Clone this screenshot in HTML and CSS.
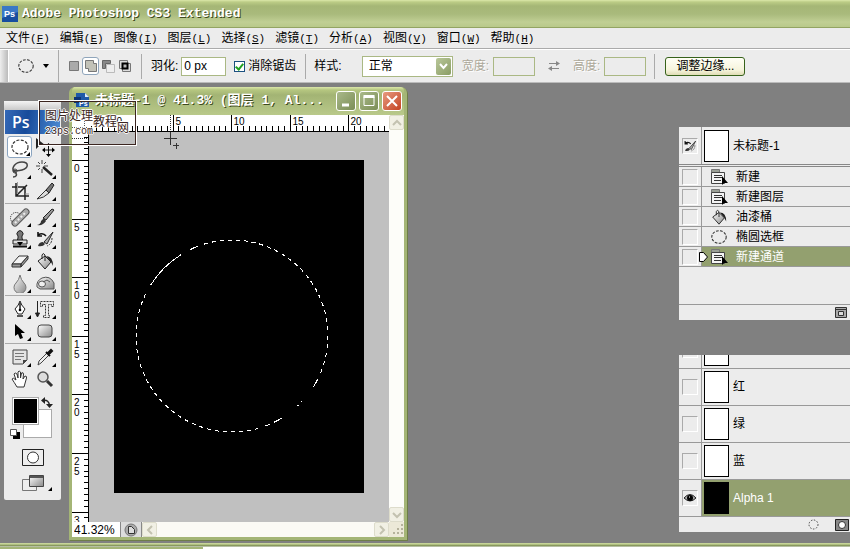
FILE: index.html
```html
<!doctype html>
<html lang="zh-CN">
<head>
    <meta charset="UTF-8">
    <meta name="viewport" content="width=device-width, initial-scale=1.0">
    <title>Adobe Photoshop CS3 Extended</title>
    <link rel="stylesheet" href="styles.css">
</head>
<body>

    <svg class="defs" aria-hidden="true">
        <linearGradient id="metal" x1="0" y1="0" x2="1" y2="1">
            <stop offset="0" stop-color="#fff"/>
            <stop offset="1" stop-color="#888"/>
        </linearGradient>
        <symbol id="i-ellipse" viewBox="0 0 20 20"><ellipse cx="10" cy="10" rx="8" ry="7" fill="none" stroke="#333" stroke-width="1.2" stroke-dasharray="3 1.5"/></symbol>
        <symbol id="i-bucket" viewBox="0 0 20 20">
            <path d="M3 10L10 5l6 6-6 7z" fill="url(#metal)" stroke="#222"/>
            <path d="M7 8V4q1-3 3 0v6" fill="none" stroke="#222"/>
            <path d="M11 5q7 0 7 10l-2-4z" fill="#222"/>
        </symbol>
        <symbol id="i-history" viewBox="0 0 20 20">
            <path d="M3 17q1-4 5-4l2 2q-2 3-7 2z" fill="#333"/>
            <path d="M9 13l9-10-6 12z" fill="#aaa" stroke="#222"/>
            <path d="M3 6q5-3 8 1M3 3v4h4" fill="none" stroke="#111" stroke-width="1.6"/>
            <path d="M17 9q0 6-5 8" fill="none" stroke="#333" stroke-dasharray="2 1"/>
        </symbol>
        <symbol id="i-state" viewBox="0 0 18 18">
            <path d="M1.500 1.500h8v3h-8z" fill="#9a9f95" stroke="#777"/>
            <path d="M1.500 4.500h13v11h-13z" fill="#f4f4f4" stroke="#444"/>
            <path d="M4 7.500h8M4 9.500h8M4 12.500h7" stroke="#333"/>
            <path d="M12 8v9l2-2h4z" fill="#000"/>
        </symbol>
    </svg>

    <header class="titlebar">
        <svg class="app-icon" viewBox="0 0 16 16" aria-hidden="true"><rect width="16" height="16" fill="#174ea0"/><path d="M0 0h16v6L0 12z" fill="#3a78c6"/><text x="2" y="11">Ps</text></svg>
        <h1>Adobe Photoshop CS3 Extended</h1>
    </header>

    <nav class="menu">
        <a href="#">文件<span>(<u>F</u>)</span></a>
        <a href="#">编辑<span>(<u>E</u>)</span></a>
        <a href="#">图像<span>(<u>I</u>)</span></a>
        <a href="#">图层<span>(<u>L</u>)</span></a>
        <a href="#">选择<span>(<u>S</u>)</span></a>
        <a href="#">滤镜<span>(<u>T</u>)</span></a>
        <a href="#">分析<span>(<u>A</u>)</span></a>
        <a href="#">视图<span>(<u>V</u>)</span></a>
        <a href="#">窗口<span>(<u>W</u>)</span></a>
        <a href="#">帮助<span>(<u>H</u>)</span></a>
    </nav>

    <form class="options">
        <div class="grip"></div>
        <button type="button" class="preset" aria-label="椭圆选框工具">
            <svg width="18" height="18"><use href="#i-ellipse"/></svg>
            <svg width="6" height="4"><path d="M0 0h6L3 4z"/></svg>
        </button>
        <div class="modes">
            <button type="button" aria-label="新选区"><svg width="14" height="14"><path d="M2.500 2.500h9v9h-9z" fill="#aaa" stroke="#777"/></svg></button>
            <button type="button" class="on" aria-label="添加到选区"><svg width="14" height="14"><path d="M1.500 1.500h8v3h3v8h-8v-3h-3z" fill="#c2c2b8" stroke="#777"/></svg></button>
            <button type="button" aria-label="从选区减去"><svg width="14" height="14"><path d="M5.500 5.500h8v8h-8z" fill="#eee" stroke="#bbb"/><path d="M1.500 1.500h8v3h-5v5h-3z" fill="#888" stroke="#666"/></svg></button>
            <button type="button" aria-label="与选区交叉"><svg width="14" height="14"><path d="M1.500 1.500h8v8h-8zM4.500 4.500h8v8h-8z" fill="#ddd" stroke="#777"/><path d="M4.500 4.500h5v5h-5z" fill="#bbb" stroke="#000" stroke-width="2"/></svg></button>
        </div>
        <div class="feather">
            <label for="feather">羽化:</label>
            <input id="feather" type="text" value="0 px">
            <input id="alias" type="checkbox" checked>
            <label for="alias">消除锯齿</label>
        </div>
        <div class="style">
            <label for="mode">样式:</label>
            <span class="select">
                <select id="mode"><option>正常</option></select>
                <svg width="15" height="17" viewBox="0 0 15 17" aria-hidden="true"><path d="M4 6l3.500 4L11 6" fill="none" stroke="#fff" stroke-width="2"/></svg>
            </span>
            <label class="off" for="w">宽度:</label>
            <input id="w" type="text" disabled>
            <button type="button" class="swap" aria-label="高度和宽度互换"><svg width="12" height="12"><path d="M1 3.500h9M2 8.500h9" stroke="#888"/><path d="M8 1l4 2.500L8 6zM4 6L0 8.500 4 11z" fill="#888"/></svg></button>
            <label class="off" for="h">高度:</label>
            <input id="h" type="text" disabled>
        </div>
        <button type="button" class="refine">调整边缘...</button>
    </form>

    <main class="workspace">
        <aside class="toolbox">
            <div class="toolbox-top"></div>
            <div class="ps">Ps</div>
            <div class="tools">
                <button class="tool more on" aria-label="椭圆选框"><svg><use href="#i-ellipse"/></svg></button>
                <button class="tool" aria-label="移动"><svg viewBox="0 0 20 20"><path d="M1 1v11l3-3 6-1z" fill="#222"/><path d="M13.500 8v10M8.500 13h10" stroke="#111"/><path d="M11 9l2.500-3L16 9zM11 17l2.500 3 2.500-3zM10 10.500L7 13l3 2.500zM17 10.500l3 2.500-3 2.500z"/></svg></button>
                <button class="tool more" aria-label="套索"><svg viewBox="0 0 20 20"><path d="M4 13C1 9 5 3 12 3s7 6 0 8-10-1-7 2 1 5-2 5" fill="none" stroke="#444" stroke-width="1.500"/><circle cx="5" cy="12" r="2" fill="none" stroke="#444"/></svg></button>
                <button class="tool more" aria-label="魔棒"><svg viewBox="0 0 20 20"><path d="M8 8l9 8" stroke="#222" stroke-width="2.500"/><path d="M7 1v4M7 10v4M1 7h4M9 7h4M3 3l2 2M11 3L9 5M3 11l2-2" stroke="#444"/></svg></button>
                <button class="tool" aria-label="裁剪"><svg viewBox="0 0 20 20"><path d="M6 2v13h13M2 6h13v13M6 15L17 4" fill="none" stroke="#222" stroke-width="1.500"/><path d="M7.500 1v12M15 13h4" stroke="#999"/></svg></button>
                <button class="tool more" aria-label="切片"><svg viewBox="0 0 20 20"><path d="M2 18L11 9l3 3q-5 5-12 6z" fill="#ddd" stroke="#333"/><path d="M11 9l6-7 2 2-5 8z" fill="#777" stroke="#222"/></svg></button>
            </div>
            <div class="tools">
                <button class="tool more" aria-label="污点修复画笔"><svg viewBox="0 0 20 20"><circle cx="6" cy="11" r="5.500" fill="none" stroke="#222" stroke-dasharray="1 1"/><path d="M5 16L16 5" stroke="#555" stroke-width="7" stroke-linecap="round"/><path d="M5 16L16 5" stroke="#aaa" stroke-width="5" stroke-linecap="round"/><path d="M5 16L16 5" stroke="#eee" stroke-width="2" stroke-dasharray="2 2"/></svg></button>
                <button class="tool more" aria-label="画笔"><svg viewBox="0 0 20 20"><path d="M8 11l9-9 2 1-8 10z" fill="#999" stroke="#222"/><path d="M2 18q4-1 4-4l3-3 2 3q-3 5-9 4z" fill="#333"/></svg></button>
                <button class="tool more" aria-label="仿制图章"><svg viewBox="0 0 20 20"><path d="M8 9V7a3 3 0 1 1 4 0v2l1 3H7z" fill="#777" stroke="#222"/><path d="M3 11h14v4H3z" fill="#ddd" stroke="#222"/><path d="M3 17.500h14" stroke="#111" stroke-width="2"/><path d="M7 13h6l-3 4z"/></svg></button>
                <button class="tool more" aria-label="历史记录画笔"><svg><use href="#i-history"/></svg></button>
                <button class="tool more" aria-label="橡皮擦"><svg viewBox="0 0 20 20"><path d="M2 13L9 5h9l-7 8z" fill="#f4f4f4" stroke="#333"/><path d="M2 13v3h9v-3zM11 16l7-8V5l-7 8z" fill="#999" stroke="#333"/></svg></button>
                <button class="tool more" aria-label="油漆桶"><svg><use href="#i-bucket"/></svg></button>
                <button class="tool more" aria-label="模糊"><svg viewBox="0 0 20 20"><path d="M10 2q1 5 4 8a6 6 0 1 1-8 0q3-3 4-8z" fill="url(#metal)" stroke="#777"/></svg></button>
                <button class="tool more" aria-label="海绵"><svg viewBox="0 0 20 20"><path d="M2 14Q1 8 7 5q8-3 12 5v6H5z" fill="url(#metal)" stroke="#555"/><ellipse cx="7" cy="11" rx="3.500" ry="3" fill="#eee" stroke="#555"/><path d="M8 9l4-2 3 2" fill="none" stroke="#555"/></svg></button>
            </div>
            <div class="tools">
                <button class="tool more" aria-label="钢笔"><svg viewBox="0 0 20 20"><path d="M10 2q-1 4-5 8l3 5h4l3-5q-4-4-5-8z" fill="#fff" stroke="#222"/><path d="M10 4v7M7 17h6" stroke="#222" stroke-width="1.500"/><circle cx="10" cy="11" r="1.300"/></svg></button>
                <button class="tool more" aria-label="文字蒙版"><svg viewBox="0 0 20 20"><path d="M5.500 2.500h13v5h-2v-2h-3v11h1v2h-6v-2h2v-11h-3v2h-2z" fill="none" stroke="#333" stroke-dasharray="2 1"/><path d="M2.500 2v15M.500 14l2 4 2-4z" fill="#222" stroke="#222"/></svg></button>
                <button class="tool more" aria-label="路径选择"><svg viewBox="0 0 20 20"><path d="M5 3v12l3-2 2 5 3-1-2-5h4z"/></svg></button>
                <button class="tool more" aria-label="圆角矩形"><svg viewBox="0 0 20 20"><rect x="3" y="4" width="14" height="12" rx="3" fill="url(#metal)" stroke="#444"/></svg></button>
            </div>
            <div class="tools">
                <button class="tool more" aria-label="注释"><svg viewBox="0 0 20 20"><path d="M3 3h14v10l-4 4H3z" fill="#e4e4e4" stroke="#444"/><path d="M5 6.500h9M5 9.500h9M5 12.500h6" stroke="#777"/><path d="M17 13h-4v4z" fill="#444"/></svg></button>
                <button class="tool more" aria-label="吸管"><svg viewBox="0 0 20 20"><path d="M3 18l1-4 8-8 2 2-8 8z" fill="#eee" stroke="#444"/><path d="M11 5l4 4M13 6l3-3 1 1-3 3z" stroke="#111" stroke-width="2"/></svg></button>
                <button class="tool" aria-label="抓手"><svg viewBox="0 0 20 20"><path d="M7 18Q4 13 2 10q1-2 4 1L4 5q1-2 3 0l1 4V3q1-2 2.500 0v6l1-5q2-1 2 1l-.500 5 2-3q2 0 1.500 2L14 18z" fill="#fff" stroke="#333"/></svg></button>
                <button class="tool" aria-label="缩放"><svg viewBox="0 0 20 20"><circle cx="8" cy="8" r="5" fill="#ddd" stroke="#555" stroke-width="1.500"/><path d="M12 12l5 5" stroke="#333" stroke-width="3"/></svg></button>
            </div>
            <div class="colors">
                <button class="fore" aria-label="前景色"></button>
                <button class="back" aria-label="背景色"></button>
                <svg class="swap-colors" width="12" height="12" aria-hidden="true"><path d="M2 3.500q6-1 6.500 5" fill="none" stroke="#222" stroke-width="1.500"/><path d="M4 0v7L0 3.500zM5 7h7l-3.500 4z" fill="#222"/></svg>
                <svg class="default-colors" width="10" height="10" aria-hidden="true"><path d="M3 3h7v7H3z"/><path d="M.500.500h6v6h-6z" fill="#fff" stroke="#555"/></svg>
            </div>
            <button class="wide" aria-label="快速蒙版"><svg width="22" height="17"><path d="M.500.500h21v16H.500z" fill="#eee" stroke="#222"/><circle cx="11" cy="8.500" r="5.500" fill="#fff" stroke="#333"/></svg></button>
            <button class="wide more" aria-label="屏幕模式"><svg width="22" height="17"><path d="M.500 4.500h14v11H.500z" fill="#eee" stroke="#777"/><path d="M7.500.500h14v11h-14z" fill="url(#metal)" stroke="#444"/><path d="M8 1h13v2H8z" fill="#555"/></svg></button>
        </aside>

        <section class="doc">
            <div class="doc-title">
                <svg width="16" height="16" viewBox="0 0 16 16" aria-hidden="true"><path d="M2 0h9l4 4v10H2z" fill="#1e59a8"/><path d="M11 0v4h4z" fill="#dce9f8"/><path d="M0 4h7v6H0z" fill="#0d3474"/><text class="mini" x="5" y="13">Ps</text></svg>
                <h2>未标题-1 @ 41.3% (图层 1, Al...</h2>
                <button aria-label="最小化"><svg width="16" height="16"><path d="M4 12h7" stroke="#fff" stroke-width="3"/></svg></button>
                <button aria-label="最大化"><svg width="16" height="16"><path d="M3 3.500h10v9H3z" fill="none" stroke="#fff"/><path d="M2.500 3.500h11" stroke="#fff" stroke-width="3"/></svg></button>
                <button class="close" aria-label="关闭"><svg width="16" height="16"><path d="M3 3l10 10M13 3L3 13" stroke="#fff" stroke-width="2"/></svg></button>
            </div>
            <div class="doc-body">
                <svg class="corner" width="17" height="17" aria-hidden="true"><path d="M12.500 0v16M0 12.500h16" stroke="#555" stroke-dasharray="1 1"/></svg>
                <svg class="ruler-x" height="17"></svg>
                <div class="scroll-y">
                    <button aria-label="向上"><svg width="10" height="8"><path d="M1 6l4-4 4 4"/></svg></button>
                    <button aria-label="向下"><svg width="10" height="8"><path d="M1 2l4 4 4-4"/></svg></button>
                </div>
                <svg class="ruler-y" width="17" height="390"></svg>
                <div class="canvas">
                    <svg class="image" width="250" height="333" viewBox="0 0 250 333">
                        <circle class="ants" cx="118" cy="176" r="96" pathLength="360"/>
                    </svg>
                    <svg class="cursor" width="17" height="17" aria-hidden="true"><path d="M0 6.500h13M6.500 0v13M9 13.500h6M12.500 11v6" stroke="#333"/></svg>
                </div>
            </div>
            <div class="doc-status">
                <input type="text" value="41.32%" aria-label="缩放比例">
                <button class="info" aria-label="文档信息"><svg width="14" height="14"><circle cx="7" cy="7" r="6" fill="#aaa" stroke="#777"/><path d="M4.500 3.500h3l3 3v4h-6z" fill="#ddd" stroke="#333"/></svg></button>
                <div class="scroll-x">
                    <button aria-label="向左"><svg width="8" height="10"><path d="M6 1L2 5l4 4"/></svg></button>
                    <button aria-label="向右"><svg width="8" height="10"><path d="M2 1l4 4-4 4"/></svg></button>
                </div>
                <svg class="resize" width="15" height="15" aria-hidden="true"><path d="M12 2h2v2h-2zM8 6h2v2H8zM12 6h2v2h-2zM4 10h2v2H4zM8 10h2v2H8zM12 10h2v2h-2z" fill="#b5b29c"/></svg>
            </div>
        </section>

        <div class="dock">
            <section class="panel">
                <div class="row snapshot">
                    <span class="cell"><i class="box"><svg width="14" height="14"><use href="#i-history"/></svg></i></span>
                    <span class="thumb"></span>未标题-1
                </div>
                <div class="row state"><span class="cell"><i class="box"></i></span><svg><use href="#i-state"/></svg>新建</div>
                <div class="row state"><span class="cell"><i class="box"></i></span><svg><use href="#i-state"/></svg>新建图层</div>
                <div class="row state"><span class="cell"><i class="box"></i></span><svg><use href="#i-bucket"/></svg>油漆桶</div>
                <div class="row state"><span class="cell"><i class="box"></i></span><svg><use href="#i-ellipse"/></svg>椭圆选框</div>
                <div class="row state current"><span class="cell"><i class="box"></i><svg class="slider" width="9" height="10"><path d="M.500.500h4l4 4.500-4 4.500h-4z" fill="#fff" stroke="#000"/></svg></span><svg><use href="#i-state"/></svg>新建通道</div>
                <div class="blank"></div>
                <div class="panel-foot">
                    <button aria-label="从当前状态创建新文档"><svg width="12" height="11"><path d="M.500.500h11v10H.500z" fill="#aaa" stroke="#333"/><path d="M1 2.500h10M3.500 4.500h5v4h-5z" fill="#ddd" stroke="#333"/></svg></button>
                </div>
            </section>

            <section class="panel">
                <div class="row channel cut"><span class="cell"><i class="box"></i></span><span class="thumb"></span></div>
                <div class="row channel"><span class="cell"><i class="box"></i></span><span class="thumb"></span>红</div>
                <div class="row channel"><span class="cell"><i class="box"></i></span><span class="thumb"></span>绿</div>
                <div class="row channel"><span class="cell"><i class="box"></i></span><span class="thumb"></span>蓝</div>
                <div class="row channel current"><span class="cell"><i class="box"><svg width="12" height="10"><path d="M0 5q6-7 12 0-6 6-12 0z" fill="#aaa" stroke="#222"/><circle cx="6" cy="5" r="3"/><path d="M5 4h1" stroke="#fff"/></svg></i></span><span class="thumb black"></span>Alpha 1</div>
                <div class="panel-foot load">
                    <button aria-label="将通道作为选区载入"><svg width="11" height="11"><circle cx="5.500" cy="5.500" r="4.500" fill="none" stroke="#444" stroke-dasharray="1.500 1.500"/></svg></button>
                    <button aria-label="将选区存储为通道"><svg width="14" height="12"><path d="M.500.500h13v11H.500z" fill="#888" stroke="#222"/><circle cx="7" cy="6" r="3.500" fill="#fff" stroke="#333"/></svg></button>
                </div>
            </section>
        </div>

        <div class="stamp">
            <p>图片处理<br><span>23ps.com</span></p>
            <p class="mid">教程</p>
            <p class="low">网</p>
        </div>
    </main>

    <footer class="bottom"><div></div></footer>

    <script>
        const rulerX = document.querySelector(".ruler-x"),
            rulerY = document.querySelector(".ruler-y"),
            ants = document.querySelector(".ants"),
            unit = 11.72;

        // half-unit ticks, a long tick and a label on every fifth unit
        let path = "", text = "";
        for (let i = -4; i < 47; i++) {
            let x = Math.round(25 + i * unit / 2) + 0.5;
            path += "M" + x + " " + (i % 10 == 0 ? 0 : 11) + "V16";
            if (i % 10 == 0) {
                text += "<text x='" + (x + 2) + "' y='10'>" + i / 2 + "</text>";
            }
        }
        rulerX.innerHTML = "<path d='" + path + "M0 16.5H300'/>" + text +
            "<path class='mark' d='M81.5 0V16'/>";

        path = "";
        text = "";
        for (let i = -4; i < 62; i++) {
            let y = Math.round(28 + i * unit / 2) + 0.5;
            path += "M" + (i % 10 == 0 ? 0 : 12) + " " + y + "H16";
            if (i % 10 == 0) {
                String(i / 2).split("").forEach((n, k) => {
                    let base = y + 11 + k * 10;
                    if (base < 394) {
                        text += "<text x='2' y='" + base + "'>" + n + "</text>";
                    }
                });
            }
        }
        rulerY.innerHTML = "<path d='" + path + "M16.5 0V390'/>" + text +
            "<path class='mark' d='M0 6.5H16'/>";

        // selection outline: pairs of start and end angles, clockwise
        let runs = [];
        for (let a = 0; a < 24; a += 5) runs.push([a, a + 2.5]);
        runs.push([27, 32], [43, 43.6], [46, 47], [59, 64], [67, 70]);
        for (let a = 74; a < 208; a += 4.8) runs.push([a, a + 2.4]);
        runs.push([212, 238], [244, 249]);
        for (let a = 253; a < 358; a += 4.8) runs.push([a, a + 2.4]);
        let dash = [], last = 0;
        runs.forEach((r, i) => {
            if (i > 0) dash.push(r[0] - last);
            dash.push(r[1] - r[0]);
            last = r[1];
        });
        dash.push(360 - last);
        ants.setAttribute("stroke-dasharray", dash.join(" "));
    </script>
</body>
</html>
```
FILE: styles.css
```css
*{
    box-sizing: border-box;
}
body{
    margin: 0;
    min-height: 100vh;
    display: flex;
    flex-direction: column;
    overflow: hidden;
    background: #808080;
    color: #000;
    font: 12px/16px "Liberation Sans", "Noto Sans CJK SC", sans-serif;
}
button{
    padding: 0;
    border: 0;
    background: none;
    color: inherit;
    font: inherit;
    display: flex;
    align-items: center;
    justify-content: center;
}
input, select{
    font: inherit;
    margin: 0;
    border-radius: 0;
}
svg{
    display: block;
    flex: none;
}
h1, h2, p{
    margin: 0;
}
.defs{
    position: absolute;
    width: 0;
    height: 0;
}

/* title and menu */
.titlebar{
    height: 28px;
    display: flex;
    align-items: center;
    gap: 4px;
    padding: 0 2px;
    border-bottom: 1px solid #93a463;
    background: linear-gradient(#dce8aa 0, #bccc86 2px, #a5b676 6px, #a9ba7c 14px, #c0cf94 22px, #b9c98a);
}
.app-icon{
    width: 16px;
    height: 16px;
}
.app-icon text, .mini{
    fill: #fff;
    font-size: 9px;
    font-weight: bold;
}
.mini{
    font-size: 7px;
}
.titlebar h1, .doc-title h2{
    color: #fff;
    font: bold 13px/18px "Liberation Mono", "Noto Sans CJK SC", monospace;
    text-shadow: 1px 1px 0 #3d4a1c;
    white-space: nowrap;
}
.menu{
    height: 21px;
    display: flex;
    align-items: center;
    gap: 10px;
    padding: 0 6px;
    background: #ececec;
    border-bottom: 1px solid #aaa;
}
.menu a{
    color: #000;
    text-decoration: none;
    white-space: nowrap;
}
.menu span{
    font: 11px "Liberation Mono", monospace;
}

/* tool options */
.options{
    height: 34px;
    display: flex;
    align-items: center;
    background: #ececec;
    border-top: 1px solid #fff;
    border-bottom: 1px solid #bbb;
    white-space: nowrap;
}
.grip{
    width: 9px;
    align-self: stretch;
    background: linear-gradient(90deg, #eee, #bbb);
    border-right: 1px solid #fff;
}
.preset{
    align-self: stretch;
    gap: 8px;
    padding: 0 9px 0 8px;
    border-right: 1px solid #aaa;
}
.modes, .feather, .style{
    display: flex;
    align-items: center;
    height: 25px;
    border-right: 1px solid #aaa;
}
.modes{
    padding: 0 8px 0 6px;
}
.modes button{
    width: 17px;
    height: 18px;
}
.modes .on{
    border: 1px solid #8fa5bb;
    border-radius: 3px;
    background: #fff;
}
.feather{
    gap: 3px;
    padding: 0 9px;
}
.options input[type=text]{
    width: 42px;
    height: 19px;
    padding: 0 2px;
    border: 1px solid #aab884;
    background: #fff;
}
.options input:disabled{
    background: #ececec;
}
.options .feather input[type=text]{
    width: 45px;
    margin-right: 5px;
}
.options input[type=checkbox]{
    appearance: none;
    width: 11px;
    height: 11px;
    border: 1px solid #1c5180;
    background: #fff;
    display: grid;
    place-items: center;
}
.options input[type=checkbox]:checked::after{
    content: "";
    width: 3px;
    height: 6px;
    border: solid #21a121;
    border-width: 0 2px 2px 0;
    transform: rotate(40deg);
}
.style{
    gap: 4px;
    padding: 0 8px;
}
.select{
    position: relative;
    margin: 0 5px 0 16px;
}
.select select{
    appearance: none;
    display: block;
    width: 91px;
    height: 21px;
    padding: 0 6px;
    border: 1px solid #aab884;
    background: #fff;
    color: #000;
}
.select svg{
    position: absolute;
    top: 2px;
    right: 2px;
    border-radius: 2px;
    background: linear-gradient(135deg, #b9c79a, #8a9d64);
    pointer-events: none;
}
.off{
    color: #aca899;
    text-shadow: 1px 1px 0 #fff;
}
.swap{
    margin: 0 9px;
}
.refine{
    width: 80px;
    height: 19px;
    margin-left: 10px;
    border: 1px solid #37621b;
    border-radius: 3px;
    background: linear-gradient(#fffff6, #f6f4dc 70%, #dfdcb6);
}

/* workspace */
.workspace{
    flex: 1;
    position: relative;
    display: flex;
    align-items: flex-start;
    padding-left: 4px;
}
.toolbox{
    width: 57px;
    margin: 18px 8px 0 0;
    padding-bottom: 8px;
    background: #ececec;
    border-radius: 2px;
}
.toolbox-top{
    height: 9px;
    background: linear-gradient(#f4f4f4, #c9c9c9);
}
.ps{
    height: 24px;
    margin: 0 1px;
    padding-left: 7px;
    background: linear-gradient(100deg, #3569b7, #174b9b 40%, #4c8ad2);
    color: #fff;
    font: 600 16px/24px "Open Sans", sans-serif;
}
.tools{
    display: grid;
    grid-template-columns: 25px 25px;
    margin: 0 1px;
    padding: 2px 2px 1px;
    border-bottom: 1px solid #aaa;
}
.tools:nth-last-child(4){
    border: 0;
}
.tool{
    position: relative;
    height: 22px;
}
.tool svg{
    width: 20px;
    height: 20px;
}
.tool.on{
    border: 1px solid #8aa4c0;
    border-radius: 3px;
    background: #fff;
}
.more{
    position: relative;
}
.more::after{
    content: "";
    position: absolute;
    right: 1px;
    bottom: 1px;
    width: 4px;
    height: 4px;
    background: #000;
    clip-path: polygon(100% 0, 100% 100%, 0 100%);
}
.colors{
    position: relative;
    height: 43px;
    margin: 6px 8px 0;
}
.colors button{
    position: absolute;
    border: 1px solid #aaa;
}
.fore{
    top: 0;
    left: 0;
    z-index: 1;
    width: 27px;
    height: 28px;
    background: #000;
    box-shadow: inset 0 0 0 1px #fff;
}
.back{
    top: 12px;
    left: 11px;
    width: 29px;
    height: 29px;
    background: #fff;
}
.swap-colors{
    position: absolute;
    top: 0;
    right: 0;
}
.default-colors{
    position: absolute;
    left: -2px;
    bottom: 1px;
}
.wide{
    width: 32px;
    height: 17px;
    margin: 9px auto 0 17px;
    padding-right: 8px;
}

/* document window */
.doc{
    width: 338px;
    margin-top: 4px;
    border: 3px solid #a4b576;
    border-top: 0;
    border-radius: 6px 6px 0 0;
    background: #a4b576;
    box-shadow: inset 1px 0 0 #dce8aa, 1px 1px 0 #6e7e48;
}
.doc-title{
    height: 28px;
    display: flex;
    align-items: center;
    gap: 3px;
    padding: 0 2px;
    border-radius: 4px 4px 0 0;
    background: linear-gradient(#dce8aa 0, #b5c680 3px, #a3b474 8px, #b9c98a);
}
.doc-title h2{
    flex: 1;
    min-width: 0;
    padding-left: 2px;
}
.doc-title button{
    width: 20px;
    height: 20px;
    border: 1px solid #fff;
    border-radius: 3px;
    background: linear-gradient(135deg, #a9b98a, #7c8e56);
}
.doc-title .close{
    background: linear-gradient(135deg, #e79a80, #c44322);
}
.doc-body{
    display: grid;
    grid-template-columns: 17px 1fr 15px;
    grid-template-rows: 17px auto;
}
.corner, .ruler-x, .ruler-y{
    background: #fff;
}
.ruler-x{
    width: 100%;
}
.ruler-x path, .ruler-y path{
    fill: none;
    stroke: #000;
}
.ruler-x .mark, .ruler-y .mark{
    stroke: #333;
    stroke-dasharray: 1 1;
}
.ruler-x text, .ruler-y text{
    font-size: 10px;
}
.scroll-y{
    grid-column: 3;
    grid-row: 1 / 3;
    display: flex;
    flex-direction: column;
    justify-content: space-between;
    background: #fdfdf9;
}
.scroll-y button, .scroll-x button{
    width: 15px;
    height: 15px;
    border: 1px solid #dddccb;
    border-radius: 2px;
    background: #f1f0e4;
}
.scroll-y path, .scroll-x path{
    fill: none;
    stroke: #c3c2b0;
    stroke-width: 2;
}
.canvas{
    position: relative;
    display: grid;
    place-items: center;
    padding-bottom: 1px;
    background: #c0c0c0;
}
.image{
    background: #000;
}
.ants{
    fill: none;
    stroke: #fff;
    shape-rendering: crispEdges;
}
.cursor{
    position: absolute;
    top: 0;
    left: 75px;
}
.doc-status{
    height: 15px;
    display: flex;
    background: #ece9d8;
}
.doc-status input{
    width: 48px;
    padding: 0 2px;
    border: 0;
    background: #fff;
}
.info{
    width: 22px;
    border: solid #888;
    border-width: 0 1px;
    background: #ddd;
}
.scroll-x{
    flex: 1;
    display: flex;
    justify-content: space-between;
    background: #fbfaf5;
}

/* panels */
.dock{
    width: 171px;
    margin: 44px 0 0 auto;
    display: flex;
    flex-direction: column;
    gap: 35px;
}
.panel{
    background: #ececec;
    overflow: hidden;
}
.row{
    display: flex;
    align-items: center;
    border-bottom: 1px solid #999;
}
.cell{
    position: relative;
    width: 23px;
    align-self: stretch;
    display: flex;
    align-items: center;
    justify-content: center;
    border-right: 1px solid #999;
    background: #ececec;
}
.box{
    width: 16px;
    height: 16px;
    display: grid;
    place-items: center;
    border: 1px solid;
    border-color: #aaa #fff #fff #aaa;
}
.thumb{
    width: 25px;
    height: 32px;
    margin: 0 4px 0 2px;
    border: 1px solid #000;
    background: #fff;
}
.black{
    background: #000;
}
.snapshot{
    height: 40px;
    border-bottom: 3px double #888;
}
.state{
    height: 20px;
}
.state > svg{
    width: 18px;
    height: 18px;
    margin: 0 8px;
}
.current{
    background: #93a06f;
    color: #fff;
}
.slider{
    position: absolute;
    right: -7px;
}
.blank{
    height: 38px;
    border-bottom: 1px solid #999;
}
.channel{
    height: 37px;
}
.cut{
    height: 14px;
    align-items: flex-end;
}
.cut .cell{
    align-items: flex-start;
}
.cut .box{
    flex: none;
    margin-top: -13px;
}
.cut .thumb{
    height: 12px;
    margin-bottom: 2px;
    border-top: 0;
}
.panel-foot{
    height: 15px;
    display: flex;
    align-items: center;
    justify-content: flex-end;
    gap: 16px;
    padding-right: 3px;
}
.load{
    padding-right: 1px;
}

/* stamp over the toolbox and the document */
.stamp{
    position: absolute;
    top: 17px;
    left: 38px;
    width: 99px;
    height: 46px;
    padding: 8px 6px;
    display: flex;
    border: 1px solid #fff;
    outline: 1px solid #3b2520;
    outline-offset: -2px;
    color: #3b2520;
    text-shadow: 1px 0 #fff, -1px 0 #fff, 0 1px #fff, 0 -1px #fff;
    line-height: 14px;
    white-space: nowrap;
}
.stamp span{
    font: 10px "Liberation Mono", monospace;
}
.stamp .mid{
    padding-top: 6px;
}
.stamp .low{
    padding-top: 12px;
}

/* bottom edge */
.bottom{
    height: 6px;
    padding-top: 4px;
    background: linear-gradient(#d3e0a4 0, #a4b576 2px, #6e7e48 3px, #fff 4px);
}
.bottom div{
    width: 203px;
    height: 2px;
    background: #a4b576;
}
```
